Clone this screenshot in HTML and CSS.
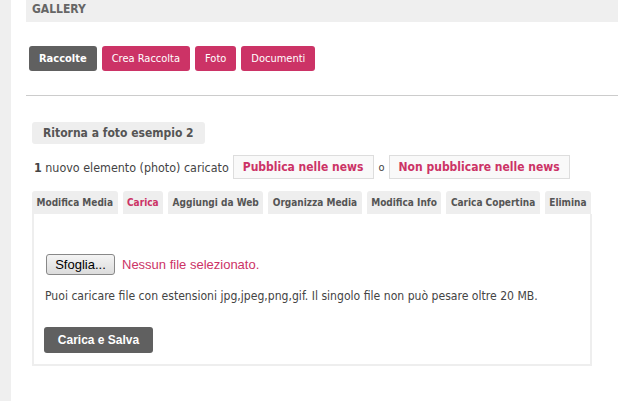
FILE: index.html
```html
<!DOCTYPE html>
<html>
<head>
<meta charset="utf-8">
<link rel="stylesheet" href="styles.css">
</head>
<body>
<div class="page">
  <div class="sidebar"></div>
  <div class="main">
    <div class="header">GALLERY</div>
    <div class="nav">
      <a class="btn btn-dark">Raccolte</a>
      <a class="btn btn-pink">Crea Raccolta</a>
      <a class="btn btn-pink">Foto</a>
      <a class="btn btn-pink">Documenti</a>
    </div>
    <div class="rule"></div>
    <div class="content">
      <div class="back"><span class="back-btn">Ritorna a foto esempio 2</span></div>
      <div class="notice">
        <span><b>1</b> nuovo elemento (photo) caricato</span>
        <a class="news-btn">Pubblica nelle news</a>
        <span class="or">o</span>
        <a class="news-btn">Non pubblicare nelle news</a>
      </div>
      <div class="tabs">
        <span class="tab">Modifica Media</span>
        <span class="tab active">Carica</span>
        <span class="tab">Aggiungi da Web</span>
        <span class="tab">Organizza Media</span>
        <span class="tab">Modifica Info</span>
        <span class="tab">Carica Copertina</span>
        <span class="tab">Elimina</span>
      </div>
      <div class="panel">
        <div class="file-row">
          <span class="file-btn">Sfoglia...</span>
          <span class="file-none">Nessun file selezionato.</span>
        </div>
        <p class="hint">Puoi caricare file con estensioni jpg,jpeg,png,gif. Il singolo file non può pesare oltre 20 MB.</p>
        <a class="btn btn-dark save">Carica e Salva</a>
      </div>
    </div>
  </div>
</div>
</body>
</html>
```
FILE: styles.css
```css
html, body {
  margin: 0;
  padding: 0;
  background: #fff;
}
body {
  font-family: "DejaVu Sans Condensed", "DejaVu Sans", sans-serif;
  font-stretch: condensed;
  font-size: 11px;
  color: #444;
  white-space: nowrap;
}
.page {
  display: flex;
  min-height: 401px;
}
.sidebar {
  width: 11px;
  background: #efefef;
  flex: none;
}
.main {
  flex: 1;
  padding-left: 15px;
}
.header {
  height: 22px;
  background: #efefef;
  padding-left: 6px;
  font-weight: bold;
  font-size: 12px;
  line-height: 18px;
  color: #666;
}
.nav {
  display: flex;
  gap: 5px;
  margin-top: 24px;
  padding-left: 3px;
}
.btn {
  display: inline-flex;
  align-items: center;
  justify-content: center;
  height: 25px;
  border-radius: 3px;
  color: #fff;
  box-sizing: border-box;
}
.btn-dark {
  background: #606060;
  font-weight: bold;
  font-size: 11px;
  padding: 0 10px;
}
.btn-pink {
  background: #cc3366;
  font-size: 11px;
  padding: 0 10px;
}
.rule {
  margin-top: 24px;
  height: 1px;
  background: #cccccc;
}
.content {
  padding-left: 6px;
  margin-right: 26px;
}
.back {
  margin-top: 26px;
  display: flex;
}
.back-btn {
  background: #eeeeee;
  border-radius: 3px;
  height: 22px;
  line-height: 22px;
  padding: 0 11px;
  font-weight: bold;
  font-size: 12px;
  color: #555;
}
.notice {
  display: flex;
  align-items: center;
  margin-top: 11px;
  padding-left: 2px;
  font-size: 12.4px;
  color: #444;
}
.news-btn {
  margin-left: 4px;
  height: 24px;
  line-height: 22px;
  box-sizing: border-box;
  border: 1px solid #dddddd;
  background: #f9f9f9;
  padding: 0 9px;
  font-weight: bold;
  font-size: 12px;
  color: #cc3366;
}
.or {
  margin-left: 5px;
  font-size: 11px;
}
.tabs {
  display: flex;
  gap: 5px;
  margin-top: 12px;
}
.tab {
  height: 23px;
  line-height: 23px;
  background: #eeeeee;
  border-radius: 3px 3px 0 0;
  padding: 0 4.5px;
  font-weight: bold;
  font-size: 10px;
  color: #555;
}
.tab.active {
  color: #cc3366;
}
.panel {
  border: 2px solid #eeeeee;
  border-top: 0;
  height: 152px;
  padding: 40px 0 0 10px;
  box-sizing: border-box;
  width: 560px;
}
.file-row {
  display: flex;
  align-items: center;
  gap: 7px;
  margin-left: 2px;
  font-family: "Liberation Sans", Arial, sans-serif;
  font-stretch: normal;
  font-size: 13px;
}
.file-btn {
  width: 69px;
  height: 21px;
  box-sizing: border-box;
  border: 1px solid #888;
  border-radius: 3px;
  background: linear-gradient(#f4f4f4, #dcdcdc);
  color: #000;
  display: flex;
  align-items: center;
  justify-content: center;
}
.file-none {
  color: #cc3366;
}
.hint {
  margin: 14px 0 0 1px;
  font-size: 12.1px;
  color: #444;
}
.save {
  margin-top: 24px;
  width: 109px;
  padding: 0;
  height: 26px;
  font-family: "Liberation Sans", Arial, sans-serif;
  font-stretch: normal;
  font-size: 12px;
}
```
